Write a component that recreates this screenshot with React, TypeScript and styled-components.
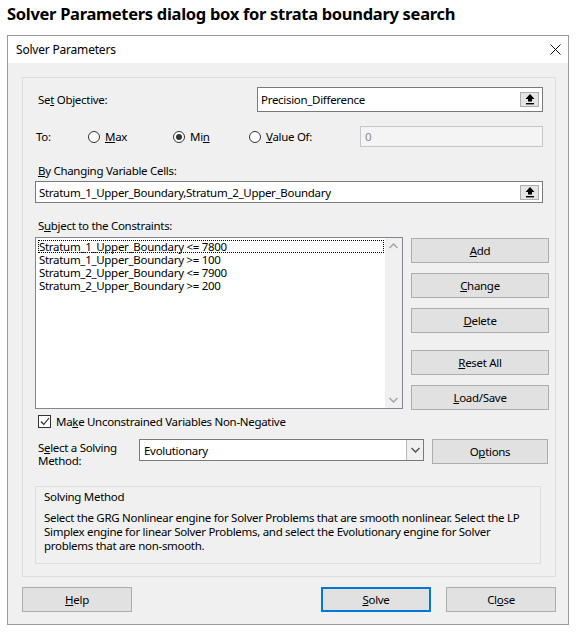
import React from 'react';
import styled, { createGlobalStyle } from 'styled-components';

const GlobalStyle = createGlobalStyle`
  body {
    margin: 0;
    background: #fff;
    font-family: "Noto Sans", "Open Sans", sans-serif;
    color: #000;
  }
  * { box-sizing: border-box; }
`;

const Page = styled.div`
  width: 580px;
  height: 643px;
  padding-left: 7px;
`;

const Heading = styled.h1`
  margin: 0;
  height: 35px;
  padding-top: 3px;
  font-size: 16.5px;
  letter-spacing: -0.3px;
  line-height: 22px;
  font-weight: 700;
`;

const Dialog = styled.div`
  width: 562px;
  height: 590px;
  border: 1px solid #9a9a9a;
  background: #f0f0f0;
  display: flex;
  flex-direction: column;
`;

const TitleBar = styled.div`
  height: 27px;
  background: #fff;
  display: flex;
  align-items: center;
  justify-content: space-between;
  padding: 0 7px 0 8px;
  font-size: 12px;
  letter-spacing: -0.2px;
`;

const Body = styled.div`
  padding: 14px 0 0 14px;
`;

const Panel = styled.div`
  width: 534px;
  height: 500px;
  border: 1px solid #dcdcdc;
  padding-left: 12px;
  display: flex;
  flex-direction: column;
  font-size: 11.5px;
  letter-spacing: -0.3px;
`;

const Row = styled.div<{ $top: number; $h: number }>`
  display: flex;
  align-items: center;
  margin-top: ${p => p.$top}px;
  height: ${p => p.$h}px;
`;

const Label = styled.div<{ $w?: number; $pad?: number }>`
  width: ${p => (p.$w ? `${p.$w}px` : 'auto')};
  padding-left: ${p => p.$pad ?? 3}px;
  white-space: nowrap;
`;

const FieldLabel = styled.div<{ $top: number }>`
  margin-top: ${p => p.$top}px;
  height: 16px;
  line-height: 16px;
  padding-left: 3px;
`;

const RefInput = styled.div<{ $w: number; $h: number; $top?: number }>`
  width: ${p => p.$w}px;
  height: ${p => p.$h}px;
  margin-top: ${p => p.$top ?? 0}px;
  border: 1px solid #7a7a7a;
  background: #fff;
  display: flex;
  align-items: center;
  justify-content: space-between;
  padding: 0 3px 0 3px;
`;

const RefButton = styled.div`
  width: 19px;
  height: 15px;
  background: #e5e5e5;
  border: 1px solid #adadad;
  display: flex;
  align-items: center;
  justify-content: center;
`;

const DisabledInput = styled.div`
  width: 183px;
  height: 21px;
  border: 1px solid #c6c6c6;
  background: #f4f4f4;
  color: #8a8a8a;
  display: flex;
  align-items: center;
  padding-left: 4px;
`;

const RadioOption = styled.div<{ $w: number }>`
  width: ${p => p.$w}px;
  display: flex;
  align-items: center;
  gap: 5px;
`;

const RadioCircle = styled.span<{ $on?: boolean }>`
  width: 12px;
  height: 12px;
  border-radius: 50%;
  border: 1px solid #333;
  background: #fff;
  display: flex;
  align-items: center;
  justify-content: center;
  &::after {
    content: '';
    width: 6px;
    height: 6px;
    border-radius: 50%;
    background: ${p => (p.$on ? '#333' : 'transparent')};
  }
`;

const ConstraintArea = styled.div`
  display: flex;
  margin-top: 3px;
`;

const ListBox = styled.div`
  width: 368px;
  height: 172px;
  border: 1px solid #828790;
  background: #fff;
  display: flex;
`;

const ListItems = styled.div`
  flex: 1;
  padding: 2px 1px 0 2px;
`;

const ListItem = styled.div<{ $focus?: boolean }>`
  height: 13px;
  line-height: 13px;
  padding-left: 1px;
  outline: ${p => (p.$focus ? '1px dotted #000' : 'none')};
  outline-offset: -1px;
  white-space: nowrap;
`;

const ScrollBar = styled.div`
  width: 17px;
  background: #f0f0f0;
  display: flex;
  flex-direction: column;
  justify-content: space-between;
  align-items: center;
  padding: 5px 0 5px;
`;

const ButtonColumn = styled.div`
  margin-left: 8px;
  padding-top: 1px;
  display: flex;
  flex-direction: column;
`;

const Button = styled.div<{ $w: number; $top?: number; $left?: number; $primary?: boolean }>`
  width: ${p => p.$w}px;
  height: 25px;
  flex-shrink: 0;
  margin-top: ${p => p.$top ?? 0}px;
  margin-left: ${p => p.$left ?? 0}px;
  background: #e1e1e1;
  border: ${p => (p.$primary ? '2px solid #0078d7' : '1px solid #adadad')};
  display: flex;
  align-items: center;
  justify-content: center;
  font-size: 11.5px;
  letter-spacing: -0.3px;
`;

const CheckRow = styled.div`
  display: flex;
  align-items: center;
  gap: 5px;
  margin-top: 4px;
  height: 14px;
  padding-left: 3px;
`;

const CheckBox = styled.span`
  width: 13px;
  height: 13px;
  border: 1px solid #333;
  background: #fff;
  display: flex;
  align-items: center;
  justify-content: center;
`;

const MethodRow = styled.div`
  display: flex;
  align-items: flex-start;
  margin-top: 11px;
  height: 26px;
`;

const MethodLabel = styled.div`
  width: 104px;
  padding: 2px 0 0 3px;
  line-height: 13px;
`;

const Select = styled.div`
  width: 285px;
  height: 22px;
  border: 1px solid #7a7a7a;
  background: #fff;
  display: flex;
  align-items: center;
  justify-content: space-between;
  padding-left: 4px;
`;

const SelectArrow = styled.div`
  width: 17px;
  height: 100%;
  border-left: 1px solid #b9b9b9;
  background: #f0f0f0;
  display: flex;
  align-items: center;
  justify-content: center;
`;

const GroupBox = styled.div`
  width: 506px;
  height: 78px;
  margin-top: 21px;
  border: 1px solid #dcdcdc;
  padding: 2px 8px 0;
`;

const GroupTitle = styled.div`
  height: 16px;
  line-height: 16px;
`;

const GroupText = styled.div`
  margin-top: 6px;
  line-height: 14px;
  white-space: nowrap;
`;

const Footer = styled.div`
  display: flex;
  align-items: center;
  padding: 10px 0 0 14px;
`;

const Spacer = styled.div`
  flex: 1;
`;

const CloseGap = styled.div`
  width: 15px;
`;

const FooterEnd = styled.div`
  width: 12px;
`;

const UpArrowIcon = () => (
  <svg width="10" height="11" viewBox="0 0 10 11">
    <polygon points="5,0 0.5,5 3,5 3,7.5 7,7.5 7,5 9.5,5" fill="#000" />
    <rect x="1" y="9" width="8" height="1.4" fill="#000" />
  </svg>
);

const CloseIcon = () => (
  <svg width="11" height="11" viewBox="0 0 11 11">
    <path d="M0.5 0.5 L10.5 10.5 M10.5 0.5 L0.5 10.5" stroke="#111" strokeWidth="1" />
  </svg>
);

const Chevron = ({ up, color = '#a6a6a6' }: { up?: boolean; color?: string }) => (
  <svg width="9" height="6" viewBox="0 0 9 6">
    <polyline
      points={up ? '0.5,5 4.5,1 8.5,5' : '0.5,1 4.5,5 8.5,1'}
      fill="none"
      stroke={color}
      strokeWidth="1.5"
    />
  </svg>
);

const CheckIcon = () => (
  <svg width="10" height="9" viewBox="0 0 10 9">
    <polyline points="1,4.5 3.8,7.5 9,1" fill="none" stroke="#222" strokeWidth="1.1" />
  </svg>
);

const constraints = [
  'Stratum_1_Upper_Boundary <= 7800',
  'Stratum_1_Upper_Boundary >= 100',
  'Stratum_2_Upper_Boundary <= 7900',
  'Stratum_2_Upper_Boundary >= 200',
];

export default function App() {
  return (
    <>
      <GlobalStyle />
      <Page>
        <Heading>Solver Parameters dialog box for strata boundary search</Heading>
        <Dialog>
          <TitleBar>
            <span>Solver Parameters</span>
            <CloseIcon />
          </TitleBar>
          <Body>
            <Panel>
              <Row $top={9} $h={25}>
                <Label $w={222}>Se<u>t</u> Objective:</Label>
                <RefInput $w={286} $h={25}>
                  <span>Precision_Difference</span>
                  <RefButton><UpArrowIcon /></RefButton>
                </RefInput>
              </Row>

              <Row $top={14} $h={21}>
                <Label $w={53} $pad={1}>To:</Label>
                <RadioOption $w={85}>
                  <RadioCircle />
                  <span><u>M</u>ax</span>
                </RadioOption>
                <RadioOption $w={76}>
                  <RadioCircle $on />
                  <span>Mi<u>n</u></span>
                </RadioOption>
                <RadioOption $w={111}>
                  <RadioCircle />
                  <span><u>V</u>alue Of:</span>
                </RadioOption>
                <DisabledInput>0</DisabledInput>
              </Row>

              <FieldLabel $top={16}><u>B</u>y Changing Variable Cells:</FieldLabel>
              <RefInput $w={508} $h={22} $top={2}>
                <span>Stratum_1_Upper_Boundary,Stratum_2_Upper_Boundary</span>
                <RefButton><UpArrowIcon /></RefButton>
              </RefInput>

              <FieldLabel $top={15}>S<u>u</u>bject to the Constraints:</FieldLabel>
              <ConstraintArea>
                <ListBox>
                  <ListItems>
                    {constraints.map((c, i) => (
                      <ListItem key={c} $focus={i === 0}>{c}</ListItem>
                    ))}
                  </ListItems>
                  <ScrollBar>
                    <Chevron up />
                    <Chevron />
                  </ScrollBar>
                </ListBox>
                <ButtonColumn>
                  <Button $w={138}><u>A</u>dd</Button>
                  <Button $w={138} $top={10}><u>C</u>hange</Button>
                  <Button $w={138} $top={10}><u>D</u>elete</Button>
                  <Button $w={138} $top={17}><u>R</u>eset All</Button>
                  <Button $w={138} $top={10}><u>L</u>oad/Save</Button>
                </ButtonColumn>
              </ConstraintArea>

              <CheckRow>
                <CheckBox><CheckIcon /></CheckBox>
                <span>Ma<u>k</u>e Unconstrained Variables Non-Negative</span>
              </CheckRow>

              <MethodRow>
                <MethodLabel>S<u>e</u>lect a Solving<br />Method:</MethodLabel>
                <Select>
                  <span>Evolutionary</span>
                  <SelectArrow><Chevron color="#555" /></SelectArrow>
                </Select>
                <Button $w={116} $left={8}>O<u>p</u>tions</Button>
              </MethodRow>

              <GroupBox>
                <GroupTitle>Solving Method</GroupTitle>
                <GroupText>
                  Select the GRG Nonlinear engine for Solver Problems that are smooth nonlinear. Select the LP
                  <br />
                  Simplex engine for linear Solver Problems, and select the Evolutionary engine for Solver
                  <br />
                  problems that are non-smooth.
                </GroupText>
              </GroupBox>
            </Panel>
          </Body>
          <Footer>
            <Button $w={110}><u>H</u>elp</Button>
            <Spacer />
            <Button $w={110} $primary><u>S</u>olve</Button>
            <CloseGap />
            <Button $w={110}>Cl<u>o</u>se</Button>
            <FooterEnd />
          </Footer>
        </Dialog>
      </Page>
    </>
  );
}
